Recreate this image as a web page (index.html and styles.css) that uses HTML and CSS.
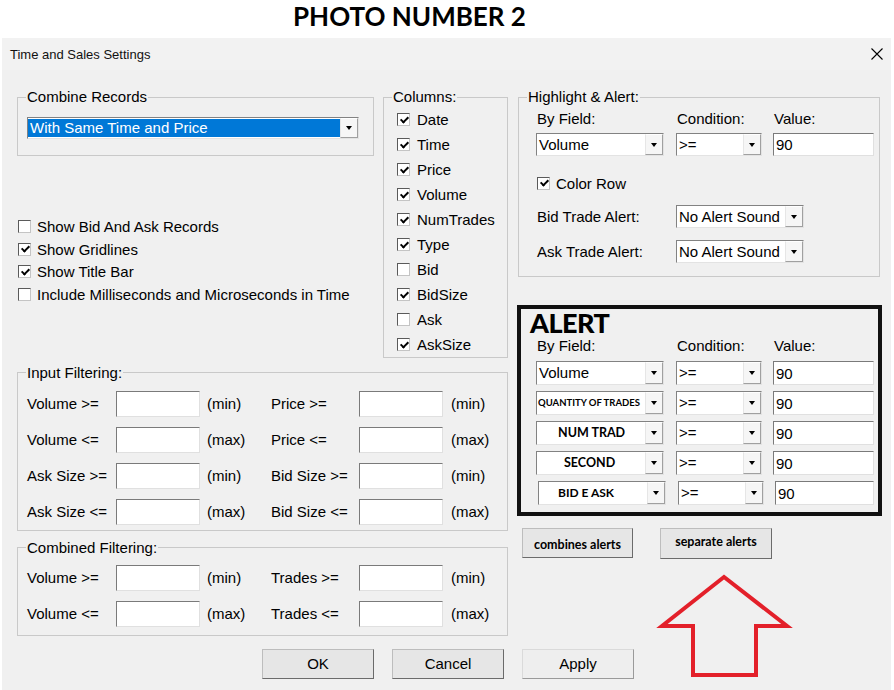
FILE: index.html
```html
<!DOCTYPE html>
<html lang="en">
<head>
	<meta charset="UTF-8">
	<title>Time and Sales Settings</title>
	<link rel="stylesheet" href="styles.css">
</head>
<body>
	<div class="photo-title">PHOTO NUMBER 2</div>

	<div class="dialog">
		<div class="titlebar">
			<span class="title">Time and Sales Settings</span>
			<svg class="close" width="12" height="12" viewBox="0 0 12 12">
				<path d="M0.5 0.5 L11.5 11.5 M11.5 0.5 L0.5 11.5" stroke="#000" stroke-width="1.1" fill="none"/>
			</svg>
		</div>

		<div class="content">
			<!-- left side -->
			<div class="left-col">
				<div class="top-part">
					<div class="general">
						<fieldset class="group combine">
							<legend>Combine Records</legend>
							<div class="select wide">
								<span class="sel-text picked">With Same Time and Price</span>
								<span class="sel-btn"></span>
							</div>
						</fieldset>
						<div class="checks">
							<div class="check"><span class="box"></span>Show Bid And Ask Records</div>
							<div class="check"><span class="box on"></span>Show Gridlines</div>
							<div class="check"><span class="box on"></span>Show Title Bar</div>
							<div class="check"><span class="box"></span>Include Milliseconds and Microseconds in Time</div>
						</div>
					</div>

					<fieldset class="group columns">
						<legend>Columns:</legend>
						<div class="check"><span class="box on"></span>Date</div>
						<div class="check"><span class="box on"></span>Time</div>
						<div class="check"><span class="box on"></span>Price</div>
						<div class="check"><span class="box on"></span>Volume</div>
						<div class="check"><span class="box on"></span>NumTrades</div>
						<div class="check"><span class="box on"></span>Type</div>
						<div class="check"><span class="box"></span>Bid</div>
						<div class="check"><span class="box on"></span>BidSize</div>
						<div class="check"><span class="box"></span>Ask</div>
						<div class="check"><span class="box on"></span>AskSize</div>
					</fieldset>
				</div>

				<fieldset class="group filter input-filter">
					<legend>Input Filtering:</legend>
					<div class="frow">
						<span>Volume &gt;=</span><input class="field" type="text"><span class="unit">(min)</span>
						<span>Price &gt;=</span><input class="field" type="text"><span class="unit">(min)</span>
					</div>
					<div class="frow">
						<span>Volume &lt;=</span><input class="field" type="text"><span class="unit">(max)</span>
						<span>Price &lt;=</span><input class="field" type="text"><span class="unit">(max)</span>
					</div>
					<div class="frow">
						<span>Ask Size &gt;=</span><input class="field" type="text"><span class="unit">(min)</span>
						<span>Bid Size &gt;=</span><input class="field" type="text"><span class="unit">(min)</span>
					</div>
					<div class="frow">
						<span>Ask Size &lt;=</span><input class="field" type="text"><span class="unit">(max)</span>
						<span>Bid Size &lt;=</span><input class="field" type="text"><span class="unit">(max)</span>
					</div>
				</fieldset>

				<fieldset class="group filter combined-filter">
					<legend>Combined Filtering:</legend>
					<div class="frow">
						<span>Volume &gt;=</span><input class="field" type="text"><span class="unit">(min)</span>
						<span>Trades &gt;=</span><input class="field" type="text"><span class="unit">(min)</span>
					</div>
					<div class="frow">
						<span>Volume &lt;=</span><input class="field" type="text"><span class="unit">(max)</span>
						<span>Trades &lt;=</span><input class="field" type="text"><span class="unit">(max)</span>
					</div>
				</fieldset>
			</div>

			<!-- right side -->
			<div class="right-col">
				<fieldset class="group highlight">
					<legend>Highlight &amp; Alert:</legend>
					<div class="arow head">
						<span>By Field:</span><span>Condition:</span><span>Value:</span>
					</div>
					<div class="arow first">
						<div class="select"><span class="sel-text">Volume</span><span class="sel-btn"></span></div>
						<div class="select"><span class="sel-text">&gt;=</span><span class="sel-btn"></span></div>
						<input class="field value" type="text" value="90">
					</div>
					<div class="check color-row"><span class="box on"></span>Color Row</div>
					<div class="sound-row bid">
						<span class="sound-label">Bid Trade Alert:</span>
						<div class="select"><span class="sel-text">No Alert Sound</span><span class="sel-btn"></span></div>
					</div>
					<div class="sound-row ask">
						<span class="sound-label">Ask Trade Alert:</span>
						<div class="select"><span class="sel-text">No Alert Sound</span><span class="sel-btn"></span></div>
					</div>
				</fieldset>

				<div class="alert-box">
					<div class="alert-title">ALERT</div>
					<div class="arow head">
						<span>By Field:</span><span>Condition:</span><span>Value:</span>
					</div>
					<div class="alert-rows">
						<div class="arow">
							<div class="select"><span class="sel-text">Volume</span><span class="sel-btn"></span></div>
							<div class="select"><span class="sel-text">&gt;=</span><span class="sel-btn"></span></div>
							<input class="field value" type="text" value="90">
						</div>
						<div class="arow">
							<div class="select"><span class="sel-text tiny">QUANTITY OF TRADES</span><span class="sel-btn"></span></div>
							<div class="select"><span class="sel-text">&gt;=</span><span class="sel-btn"></span></div>
							<input class="field value" type="text" value="90">
						</div>
						<div class="arow">
							<div class="select"><span class="sel-text bold-in">NUM TRAD</span><span class="sel-btn"></span></div>
							<div class="select"><span class="sel-text">&gt;=</span><span class="sel-btn"></span></div>
							<input class="field value" type="text" value="90">
						</div>
						<div class="arow">
							<div class="select"><span class="sel-text bold-in second">SECOND</span><span class="sel-btn"></span></div>
							<div class="select"><span class="sel-text">&gt;=</span><span class="sel-btn"></span></div>
							<input class="field value" type="text" value="90">
						</div>
						<div class="arow shifted">
							<div class="select"><span class="sel-text bold-in bidask">BID E ASK</span><span class="sel-btn"></span></div>
							<div class="select"><span class="sel-text">&gt;=</span><span class="sel-btn"></span></div>
							<input class="field value" type="text" value="90">
						</div>
					</div>
				</div>

				<div class="alert-buttons">
					<button class="btn small">combines alerts</button>
					<button class="btn small sep">separate alerts</button>
				</div>
			</div>

			<div class="footer">
				<button class="btn">OK</button>
				<button class="btn">Cancel</button>
				<button class="btn light">Apply</button>
			</div>
		</div>

		<!-- red annotation arrow -->
		<svg class="arrow" width="140" height="112" viewBox="0 0 140 112">
			<polygon points="69,7 7,56 38,56 38,105 101,105 101,56 132,56" fill="none" stroke="#e3202a" stroke-width="4" stroke-linejoin="miter"/>
		</svg>
	</div>
</body>
</html>
```

FILE: styles.css
```css
*{
	margin: 0;
	padding: 0;
	box-sizing: border-box;
}
html, body{
	height: 690px;
	overflow: hidden;
}
body{
	background: #fff;
	font-family: "Liberation Sans", Arial, sans-serif;
	font-size: 15px;
	color: #000;
}
.photo-title{
	height: 38px;
	padding-left: 293px;
	font-family: Lato, "Liberation Sans", sans-serif;
	font-weight: 700;
	font-size: 26px;
	line-height: 32px;
}
.dialog{
	position: relative;
	margin: 0 3px 0 2px;
	height: 652px;
	background: #f0f0f0;
}
.titlebar{
	height: 32px;
	display: flex;
	align-items: center;
	justify-content: space-between;
	padding: 0 8px 0 8px;
	background: #f2f2f2;
}
.title{
	font-size: 13px;
	color: #111;
}
.content{
	display: grid;
	grid-template-columns: 491px 365px;
	column-gap: 9px;
	padding: 18px 0 0 15px;
}

/* group boxes */
.group{
	border: 1px solid #c9c9c9;
	padding: 0 0 0 8px;
	min-width: 0;
}
.group legend{
	padding: 0 1px;
	line-height: 18px;
}
.top-part{
	display: flex;
	gap: 9px;
}
.general{
	width: 357px;
}
.combine{
	padding-top: 11px;
	padding-bottom: 16px;
}
.combine .select{
	margin-left: 1px;
	width: 332px;
	height: 22px;
}
.checks{
	margin-top: 59.5px;
	margin-left: 1px;
}
.columns{
	width: 125px;
	padding-top: 1px;
	padding-left: 13px;
}
.columns legend{
	margin-left: -5px;
}
.columns .check{
	height: 25px;
}
.columns .box{
	margin-right: 7px;
}

/* checkbox */
.check{
	display: flex;
	align-items: center;
	height: 22.5px;
	white-space: nowrap;
}
.box{
	position: relative;
	flex: none;
	width: 13px;
	height: 13px;
	margin-right: 6px;
	background: #fff;
	border: 1px solid;
	border-color: #5a5a5a #c4c4c4 #c4c4c4 #5a5a5a;
}
.box.on::after{
	content: "";
	position: absolute;
	left: 3.5px;
	top: 0.5px;
	width: 3px;
	height: 6px;
	border: solid #000;
	border-width: 0 2px 2px 0;
	transform: rotate(45deg);
}

/* select-like combo */
.select{
	display: flex;
	height: 23px;
	background: #fff;
	border: 1px solid;
	border-color: #828282 #e3e3e3 #e3e3e3 #828282;
}
.sel-text{
	flex: 1;
	padding-left: 2px;
	line-height: 21px;
	white-space: nowrap;
	overflow: hidden;
}
.sel-text.picked{
	background: #0078d7;
	color: #fff;
	margin: 1px 0 1px 0;
	line-height: 18px;
}
.sel-btn{
	flex: none;
	width: 18px;
	display: flex;
	align-items: center;
	justify-content: center;
	background: #f6f6f6;
	border: 1px solid;
	border-color: #fff #a0a0a0 #a0a0a0 #e6e6e6;
}
.sel-btn::after{
	content: "";
	border-left: 3.5px solid transparent;
	border-right: 3.5px solid transparent;
	border-top: 4px solid #000;
}
.sel-text.tiny{
	font-family: Lato, sans-serif;
	font-weight: 700;
	font-size: 9.5px;
	padding-left: 1px;
}
.sel-text.bold-in{
	font-family: Lato, sans-serif;
	font-weight: 700;
	font-size: 12.5px;
	padding-left: 21px;
}
.sel-text.second{
	padding-left: 27px;
}
.sel-text.bidask{
	font-size: 12px;
	padding-left: 19px;
}

/* text fields */
.field{
	display: block;
	height: 26px;
	background: #fff;
	border: 1px solid;
	border-color: #7a7a7a #e0e0e0 #e0e0e0 #7a7a7a;
	font-family: "Liberation Sans", Arial, sans-serif;
	font-size: 15px;
	padding-left: 2px;
	outline: none;
}

/* filter rows */
.frow{
	display: grid;
	grid-template-columns: 89px 84px 71px 88px 84px auto;
	align-items: center;
	height: 36px;
	margin-left: 1px;
	white-space: nowrap;
}
.frow .unit{
	padding-left: 7px;
}
.frow .unit:last-child{
	padding-left: 8px;
}
.input-filter{
	margin-top: 5.5px;
	padding-top: 4px;
}
.combined-filter{
	margin-top: 8px;
	padding-top: 3px;
	padding-bottom: 3px;
}

/* right side */
.highlight{
	margin-left: 1px;
	width: 362px;
	padding-top: 4px;
	padding-bottom: 13px;
	padding-left: 17px;
}
.highlight legend{
	margin-left: -9px;
}
.arow{
	display: grid;
	grid-template-columns: 128px 86px 100px;
	column-gap: 12px;
	align-items: center;
}
.arow > :nth-child(3){
	margin-left: -1px;
}
.arow.head{
	height: 18px;
	line-height: 18px;
}
.arow.head span{
	padding-left: 1px;
}
.arow .value{
	height: 23px;
}
.arow.first{
	margin-top: 5px;
}
.color-row{
	margin-top: 18px;
	height: 18px;
	padding-left: 1px;
}
.sound-row{
	display: flex;
	align-items: center;
}
.sound-row.bid{
	margin-top: 13px;
}
.sound-row.ask{
	margin-top: 12px;
}
.sound-label{
	width: 140px;
	padding-left: 1px;
}
.sound-row .select{
	width: 128px;
}

.alert-box{
	margin-top: 28px;
	border: 4px solid #111;
	padding: 0 0 7px 15px;
}
.alert-title{
	margin-left: -6px;
	font-family: Lato, sans-serif;
	font-weight: 900;
	font-size: 27px;
	line-height: 28px;
	letter-spacing: -0.5px;
}
.alert-rows{
	display: flex;
	flex-direction: column;
	gap: 6px;
	margin-top: 6px;
}
.alert-rows .select,
.alert-rows .value{
	height: 24px;
}
.arow.shifted{
	margin-left: 2px;
	grid-template-columns: 128px 86px 98px;
}

.alert-buttons{
	display: flex;
	gap: 27px;
	margin: 12px 0 0 5px;
}

/* buttons */
.btn{
	width: 112px;
	height: 30px;
	background: #e6e6e6;
	border: 1px solid;
	border-color: #bdbdbd #6b6b6b #6b6b6b #bdbdbd;
	font-family: "Liberation Sans", Arial, sans-serif;
	font-size: 15px;
	color: #000;
}
.btn.light{
	background: #eeeeee;
	border-color: #dadada #9a9a9a #9a9a9a #dadada;
}
.btn.small{
	width: 111px;
	font-family: Lato, sans-serif;
	font-weight: 700;
	font-size: 12.5px;
	padding-top: 2px;
}
.btn.sep{
	width: 112px;
	height: 31px;
	padding-top: 0;
	padding-bottom: 4px;
}
.footer{
	grid-column: 1 / -1;
	display: flex;
	gap: 18px;
	margin: 13px 0 0 245px;
}

.arrow{
	position: absolute;
	left: 653px;
	top: 532px;
}
```
